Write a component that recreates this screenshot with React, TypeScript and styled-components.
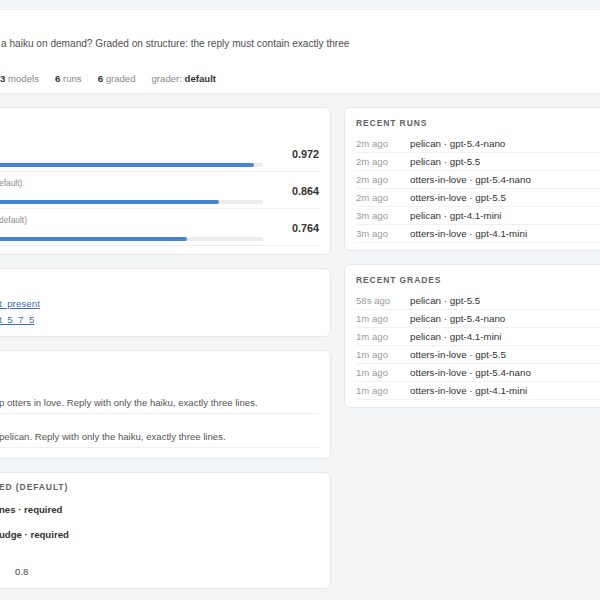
import React from 'react'
import styled, { createGlobalStyle } from 'styled-components'

const scores = [
  { label: '', value: 0.972 },
  { label: 'efault)', value: 0.864 },
  { label: 'default)', value: 0.764 },
]

const runs = [
  { ago: '2m ago', name: 'pelican · gpt-5.4-nano' },
  { ago: '2m ago', name: 'pelican · gpt-5.5' },
  { ago: '2m ago', name: 'otters-in-love · gpt-5.4-nano' },
  { ago: '2m ago', name: 'otters-in-love · gpt-5.5' },
  { ago: '3m ago', name: 'pelican · gpt-4.1-mini' },
  { ago: '3m ago', name: 'otters-in-love · gpt-4.1-mini' },
]

const grades = [
  { ago: '58s ago', name: 'pelican · gpt-5.5' },
  { ago: '1m ago', name: 'pelican · gpt-5.4-nano' },
  { ago: '1m ago', name: 'pelican · gpt-4.1-mini' },
  { ago: '1m ago', name: 'otters-in-love · gpt-5.5' },
  { ago: '1m ago', name: 'otters-in-love · gpt-5.4-nano' },
  { ago: '1m ago', name: 'otters-in-love · gpt-4.1-mini' },
]

// the page is wider than the window: the left edge of the left column is clipped
const App = (): JSX.Element => {
  return (
    <>
      <GlobalStyle />
      <Page>
        <Header>
          <Description>
            a haiku on demand? Graded on structure: the reply must contain exactly three
          </Description>
          <Stats>
            <span>
              <b>3</b> models
            </span>
            <span>
              <b>6</b> runs
            </span>
            <span>
              <b>6</b> graded
            </span>
            <span>
              grader: <b>default</b>
            </span>
          </Stats>
        </Header>

        <Grid>
          <Column>
            <Card $top={27} $bottom={8}>
              {scores.map((s, i) => (
                <ScoreRow key={i}>
                  <div>
                    <ScoreLabel>{s.label}</ScoreLabel>
                    <Track>
                      <Fill style={{ width: `${s.value * 100}%` }} />
                    </Track>
                  </div>
                  <ScoreValue>{s.value.toFixed(3)}</ScoreValue>
                </ScoreRow>
              ))}
            </Card>

            <Card $top={27} $bottom={8}>
              <CheckLink href='#'>t_present</CheckLink>
              <CheckLink href='#'>t_5_7_5</CheckLink>
            </Card>

            <Card $top={29} $bottom={10}>
              <PromptItem>p otters in love. Reply with only the haiku, exactly three lines.</PromptItem>
              <PromptItem>pelican. Reply with only the haiku, exactly three lines.</PromptItem>
            </Card>

            <Card $top={9} $bottom={9}>
              <CardTitle>ED (DEFAULT)</CardTitle>
              <Criteria>
                <li>nes · required</li>
                <li>udge · required</li>
              </Criteria>
              <Threshold>0.8</Threshold>
            </Card>
          </Column>

          <Column>
            <SideCard>
              <CardTitle $gap={6}>Recent runs</CardTitle>
              {runs.map((r, i) => (
                <ActivityRow key={i}>
                  <Ago>{r.ago}</Ago>
                  <span>{r.name}</span>
                </ActivityRow>
              ))}
            </SideCard>
            <SideCard>
              <CardTitle $gap={6}>Recent grades</CardTitle>
              {grades.map((r, i) => (
                <ActivityRow key={i}>
                  <Ago>{r.ago}</Ago>
                  <span>{r.name}</span>
                </ActivityRow>
              ))}
            </SideCard>
          </Column>
        </Grid>
      </Page>
    </>
  )
}

export default App

const GlobalStyle = createGlobalStyle`
  html, body {
    margin: 0;
    overflow: hidden;
    background: #f4f5f7;
  }
  body {
    font-family: "Liberation Sans", Arial, sans-serif;
    color: #333;
  }
`

const Page = styled.div`
  padding-top: 9px;
  width: 600px;
`

const Header = styled.header`
  background: #fff;
  border-top: 1px solid #eceef1;
  border-bottom: 1px solid #eceef1;
  padding: 27px 0 7px 1px;
`

const Description = styled.p`
  margin: 0 0 21px;
  font-size: 10.1px;
  line-height: 14px;
  color: #505050;
  white-space: nowrap;
`

const Stats = styled.div`
  display: flex;
  gap: 16px;
  font-size: 9.6px;
  line-height: 14px;
  color: #8a8a8a;
  margin-left: -1px;
  b {
    color: #333;
  }
`

const Grid = styled.div`
  display: grid;
  grid-template-columns: 344px 300px;
  gap: 13px;
  align-items: start;
  margin: 13px 0 0 -13px;
`

const Column = styled.div`
  display: flex;
  flex-direction: column;
  gap: 13px;
`

const Card = styled.section<{ $top: number; $bottom: number }>`
  background: #fff;
  border: 1px solid #e6e8eb;
  border-radius: 6px;
  padding: ${(p) => `${p.$top}px 11px ${p.$bottom}px`};
`

const SideCard = styled.section`
  background: #fff;
  border: 1px solid #e6e8eb;
  border-radius: 6px;
  padding: 9px 0 7px 11px;
`

const CardTitle = styled.h3<{ $gap?: number }>`
  margin: 0 0 ${(p) => p.$gap ?? 0}px;
  font-size: 8.5px;
  line-height: ${(p) => (p.$gap ? 12 : 10)}px;
  font-weight: 700;
  text-transform: uppercase;
  letter-spacing: 0.9px;
  color: #5f6368;
`

const ScoreRow = styled.div`
  display: grid;
  grid-template-columns: 1fr 56px;
  align-items: center;
  padding: 5px 0 4px;
  border-bottom: 1px solid #eef0f2;
`

const ScoreLabel = styled.div`
  height: 12px;
  margin-bottom: 11px;
  font-size: 8.4px;
  line-height: 12px;
  color: #8a8a8a;
  white-space: nowrap;
`

// the track runs on past the clipped left edge
const Track = styled.div`
  height: 4px;
  width: calc(100% + 58px);
  margin-left: -58px;
  background: #e9ebee;
  border-radius: 2px;
  overflow: hidden;
`

const Fill = styled.div`
  height: 100%;
  background: #4485d6;
  border-radius: 2px;
`

const ScoreValue = styled.div`
  text-align: right;
  font-size: 10.8px;
  font-weight: 700;
  color: #333;
`

const CheckLink = styled.a`
  display: block;
  font-size: 9.8px;
  line-height: 16px;
  color: #3b6fc6;
  text-decoration: underline;
`

const PromptItem = styled.div`
  padding: 16px 0 3px;
  border-bottom: 1px solid #eceef1;
  font-size: 9.6px;
  line-height: 14px;
  color: #555;
  white-space: nowrap;
`

const Criteria = styled.ul`
  list-style: none;
  margin: 11px 0 0;
  padding: 0;
  display: flex;
  flex-direction: column;
  gap: 11px;
  li {
    font-size: 9.6px;
    line-height: 14px;
    font-weight: 700;
    color: #333;
  }
`

const Threshold = styled.div`
  margin-top: 23px;
  padding-left: 16px;
  font-size: 9.6px;
  line-height: 14px;
  color: #444;
`

const ActivityRow = styled.div`
  display: flex;
  height: 17px;
  line-height: 17px;
  border-bottom: 1px solid #f0f1f3;
  font-size: 9.8px;
  color: #333;
  white-space: nowrap;
`

const Ago = styled.span`
  width: 54px;
  flex-shrink: 0;
  color: #9b9b9b;
  font-size: 9.6px;
`
